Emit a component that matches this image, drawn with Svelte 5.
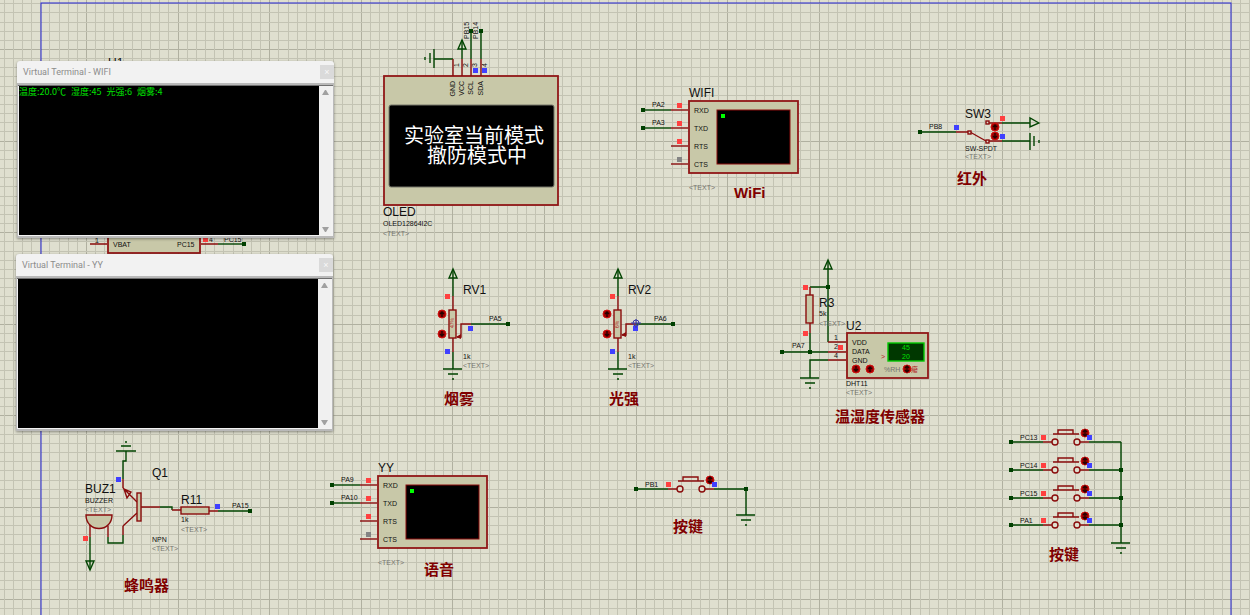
<script>
	const CELL = 9.16;
	const TILE = 458;

	const gridLines = Array.from({ length: 50 }, (_, i) => ({
		at: Math.round(i * CELL),
		major: i % 10 === 0
	}));

	const terminals = [
		{
			id: 'wifi',
			title: 'Virtual Terminal - WIFI',
			readings: ['温度:20.0℃', '湿度:45', '光强:6', '烟雾:4']
		},
		{ id: 'yy', title: 'Virtual Terminal - YY', readings: [] }
	];

	const headings = [
		[734, 198, 'WiFi'],
		[957, 184, '红外'],
		[444, 404, '烟雾'],
		[609, 404, '光强'],
		[835, 422, '温湿度传感器'],
		[124, 591, '蜂鸣器'],
		[424, 575, '语音'],
		[673, 532, '按键'],
		[1049, 560, '按键']
	];

	const oledPins = [
		{ x: 453, name: 'GND' },
		{ x: 462, name: 'VCC' },
		{ x: 471, name: 'SCL' },
		{ x: 481, name: 'SDA' }
	];

	const uartPins = [
		{ y: 110, name: 'RXD', level: 'high' },
		{ y: 128, name: 'TXD', level: 'high' },
		{ y: 146, name: 'RTS', level: 'high' },
		{ y: 164, name: 'CTS', level: 'none' }
	];

	const keys = [
		{ y: 442, net: 'PC13' },
		{ y: 470, net: 'PC14' },
		{ y: 498, net: 'PC15' },
		{ y: 525, net: 'PA1' }
	];
</script>

{#snippet dot(x, y)}
	<rect class="dot" x={x - 2} y={y - 2} width="4" height="4" />
{/snippet}

{#snippet probe(x, y, level)}
	<rect class="probe {level}" x={x - 2} y={y - 2} width="5" height="5" />
{/snippet}

{#snippet knob(x, y, glyph)}
	<g transform="translate({x} {y})">
		<circle class="knob" r="4" />
		{#if glyph === 'up'}
			<path class="knob-mark" d="M0 3V-2M-2 0L0 -2L2 0" />
		{:else if glyph === 'down'}
			<path class="knob-mark" d="M0 -3V2M-2 0L0 2L2 0" />
		{:else}
			<path class="knob-mark" d="M0 -3V3M-2 -1L0 -3L2 -1M-2 1L0 3L2 1" />
		{/if}
	</g>
{/snippet}

{#snippet ground(x, y)}
	<path class="wire" d="M{x - 10} {y}H{x + 9}M{x - 5} {y + 5}H{x + 5}M{x - 1} {y + 10}H{x + 1}" />
{/snippet}

{#snippet power(x, y)}
	<path class="arrow" d="M{x} {y}L{x - 4} {y + 9}H{x + 4}Z" />
{/snippet}

{#snippet uart(x, y, name, nets)}
	<g transform="translate({x} {y})">
		<text class="name" x="689" y="97">{name}</text>
		<rect class="chip" x="689" y="101" width="109" height="72" />
		<rect class="crt" x="717" y="110" width="73" height="54" />
		<rect class="cursor" x="721" y="114" width="4" height="4" />
		{#each uartPins as pin, i}
			<path class="pin" d="M671 {pin.y}H688" />
			<text class="small" x="694" y={pin.y + 3}>{pin.name}</text>
			{@render probe(679, pin.y - 5, pin.level)}
			{#if nets[i]}
				<path class="wire" d="M643 {pin.y}H671" />
				{@render dot(643, pin.y)}
				<text class="small" x="652" y={pin.y - 3}>{nets[i]}</text>
			{/if}
		{/each}
		<text class="small note" x="689" y="190">&lt;TEXT&gt;</text>
	</g>
{/snippet}

{#snippet pot(x, name, net, value, tap)}
	<g transform="translate({x} 0)">
		<path class="wire" d="M453 270V296M453 352V369M471 324H508" />
		<path class="pin" d="M453 296V310M453 338V352M471 324H461V{tap}H457" />
		<path class="tip" d="M456 {tap}L461 {tap - 3}V{tap + 2}Z" />
		<rect class="body" x="449" y="310" width="7" height="28" />
		<text class="micro red" transform="translate(454 328) rotate(-90)">{value}</text>
		{@render power(453, 269)}
		{@render ground(453, 369)}
		{@render dot(508, 324)}
		{@render probe(447, 296, 'high')}
		{@render probe(447, 351, 'low')}
		{@render probe(470, 328, 'low')}
		{@render knob(442, 314, 'up')}
		{@render knob(442, 334, 'down')}
		<text class="name" x="463" y="294">{name}</text>
		<text class="small" x="489" y="321">{net}</text>
		<text class="small" x="463" y="359">1k</text>
		<text class="small note" x="463" y="368">&lt;TEXT&gt;</text>
	</g>
{/snippet}

{#snippet key(x, y, net)}
	<g transform="translate({x} {y})">
		<path class="wire" d="M0 0H32M78 0H110" />
		<path class="pin" d="M32 0H41M69 0H78M42 -8H68M47 -8V-12H62V-8" />
		<circle class="contact" cx="44" cy="0" r="3" />
		<circle class="contact" cx="66" cy="0" r="3" />
		{@render dot(0, 0)}
		{@render probe(32, -5, 'high')}
		{@render knob(74, -9, 'both')}
		{@render probe(78, -5, 'low')}
		<text class="small" x="9" y="-2">{net}</text>
	</g>
{/snippet}

<main>
	<svg class="sheet" role="img" aria-label="Schematic">
		<defs>
			<pattern id="grid" x="86" y="49" width={TILE} height={TILE} patternUnits="userSpaceOnUse">
				{#each gridLines as line}
					<rect class:major={line.major} class="grid-line" x={line.at} y="0" width="1" height={TILE} />
					<rect class:major={line.major} class="grid-line" x="0" y={line.at} width={TILE} height="1" />
				{/each}
			</pattern>
		</defs>
		<rect width="100%" height="100%" fill="url(#grid)" />
		<rect class="frame" x="41" y="3" width="1190" height="842" />

		<!-- U1, mostly behind the terminals -->
		<text class="name" x="108" y="67">U1</text>
		<rect class="chip" x="108" y="72" width="92" height="181" />
		<path class="pin" d="M90 244H107M201 244H218" />
		<path class="wire" d="M218 244H244" />
		{@render dot(244, 244)}
		{@render probe(205, 239, 'high')}
		<text class="small" x="113" y="247">VBAT</text>
		<text class="small" x="177" y="247">PC15</text>
		<text class="small" x="95" y="243">1</text>
		<text class="small" x="209" y="242">4</text>
		<text class="small" x="224" y="242">PC15</text>

		<!-- OLED -->
		<path class="wire" d="M453 59H434M434 49V68M430 53V63M425 57V60M462 59V40M471 59V31M481 59V31" />
		<rect class="chip" x="384" y="76" width="174" height="129" />
		<rect class="glass" x="389" y="105" width="165" height="82" rx="2" />
		{#each oledPins as pin, i}
			<path class="pin" d="M{pin.x} 59V76" />
			<text class="small" transform="translate({pin.x + 6} 67) rotate(-90)">{i + 1}</text>
			<text class="small end" transform="translate({pin.x + 2} 81) rotate(-90)">{pin.name}</text>
		{/each}
		{@render power(462, 40)}
		{@render dot(471, 31)}
		{@render dot(481, 31)}
		{@render probe(475, 70, 'low')}
		{@render probe(484, 70, 'low')}
		<text class="small" transform="translate(469 39) rotate(-90)">PB15</text>
		<text class="small" transform="translate(478 39) rotate(-90)">PB14</text>
		<text class="oled" x="404" y="143">实验室当前模式</text>
		<text class="oled" x="427" y="163">撤防模式中</text>
		<text class="name" x="383" y="216">OLED</text>
		<text class="small" x="383" y="226">OLED12864I2C</text>
		<text class="small note" x="383" y="236">&lt;TEXT&gt;</text>

		{@render uart(0, 0, 'WIFI', ['PA2', 'PA3'])}
		{@render uart(-311, 375, 'YY', ['PA9', 'PA10'])}

		<!-- SW3 -->
		<path class="wire" d="M920 132H956M1002 123H1030M1002 141H1030M1030 133V150M1034 136V146M1039 140V143" />
		<path class="pin" d="M956 132H968M989 123H1002M989 141H1002" />
		<path class="slant" d="M970 132L986 141" />
		<rect class="contact" x="968" y="131" width="3" height="3" />
		<rect class="contact" x="986" y="121" width="3" height="3" />
		<rect class="contact" x="986" y="140" width="3" height="3" />
		<path class="arrow" d="M1039 123L1030 118V127Z" />
		{@render dot(920, 132)}
		{@render probe(956, 127, 'low')}
		{@render probe(1002, 118, 'high')}
		{@render probe(1002, 136, 'low')}
		{@render knob(995, 127, 'up')}
		{@render knob(995, 136, 'down')}
		<text class="name" x="965" y="118">SW3</text>
		<text class="small" x="929" y="129">PB8</text>
		<text class="small" x="965" y="151">SW-SPDT</text>
		<text class="small note" x="965" y="159">&lt;TEXT&gt;</text>

		{@render pot(0, 'RV1', 'PA5', '47%', 337)}
		{@render pot(165, 'RV2', 'PA6', '6%', 335)}
		<path class="origin" d="M631 323H641M636 319V328M633 323A3 3 0 1 1 639 323A3 3 0 1 1 633 323" />

		<!-- DHT11 -->
		<path class="wire" d="M828 261V342M810 287H828M810 333V352M782 352H828M828 360H810V378" />
		<path class="pin" d="M810 287V295M810 323V333M828 342H846M828 352H846M828 360H846" />
		<rect class="body" x="806" y="295" width="7" height="28" />
		{@render power(828, 260)}
		{@render ground(810, 378)}
		{@render dot(828, 287)}
		{@render dot(810, 352)}
		{@render dot(782, 352)}
		<rect class="chip" x="847" y="333" width="81" height="45" />
		<rect class="lcd" x="888" y="343" width="36" height="18" />
		<text class="small digits" x="902" y="350">45</text>
		<text class="small digits" x="902" y="359">20</text>
		<text class="small red" x="881" y="359">&gt;</text>
		<text class="small note" x="884" y="372">%RH</text>
		<text class="small red" x="911" y="372">癈</text>
		{@render knob(856, 369, 'down')}
		{@render knob(870, 369, 'up')}
		{@render knob(907, 369, 'both')}
		{@render probe(805, 287, 'high')}
		{@render probe(805, 333, 'high')}
		{@render probe(840, 347, 'high')}
		<text class="name" x="819" y="307">R3</text>
		<text class="small" x="819" y="316">5k</text>
		<text class="small note" x="819" y="326">&lt;TEXT&gt;</text>
		<text class="name" x="846" y="330">U2</text>
		<text class="small" x="834" y="340">1</text>
		<text class="small" x="834" y="349">2</text>
		<text class="small" x="834" y="358">4</text>
		<text class="small" x="852" y="345">VDD</text>
		<text class="small" x="852" y="354">DATA</text>
		<text class="small" x="852" y="363">GND</text>
		<text class="small" x="792" y="348">PA7</text>
		<text class="small" x="846" y="386">DHT11</text>
		<text class="small note" x="846" y="395">&lt;TEXT&gt;</text>

		<!-- buzzer driver -->
		<path class="wire" d="M116 451H136M121 446H131M125 442H127M126 451V461H123V479M123 535V543H108V537M90 537V569M160 507H172V510M218 511H250" />
		<path class="pin" d="M123 479V488M123 526V535M108 526V537M90 525V537M141 507H160M172 510H181M209 511H218" />
		<path class="slant" d="M123 488L137 502M137 513L123 526M124 489L127 498L131 492Z" />
		<rect class="body" x="137" y="493" width="4" height="28" />
		<rect class="body" x="181" y="507" width="28" height="7" />
		<path class="bell" d="M86 515H112C112 533 86 533 86 515Z" />
		<path class="arrow" d="M90 570L86 561H94Z" />
		{@render dot(250, 511)}
		{@render probe(118, 479, 'low')}
		{@render probe(85, 538, 'high')}
		{@render probe(217, 506, 'low')}
		<text class="name" x="152" y="477">Q1</text>
		<text class="name" x="85" y="493">BUZ1</text>
		<text class="small" x="85" y="503">BUZZER</text>
		<text class="small note" x="85" y="512">&lt;TEXT&gt;</text>
		<text class="name" x="181" y="504">R11</text>
		<text class="small" x="181" y="522">1k</text>
		<text class="small note" x="181" y="532">&lt;TEXT&gt;</text>
		<text class="small" x="152" y="542">NPN</text>
		<text class="small note" x="152" y="551">&lt;TEXT&gt;</text>
		<text class="small" x="232" y="508">PA15</text>

		<!-- push buttons -->
		{@render key(636, 489, 'PB1')}
		<path class="wire" d="M746 489V515" />
		{@render dot(746, 489)}
		{@render ground(746, 515)}

		<path class="wire" d="M1121 442V543" />
		{#each keys as k, i}
			{@render key(1011, k.y, k.net)}
			{#if i > 0}
				{@render dot(1121, k.y)}
			{/if}
		{/each}
		{@render ground(1121, 543)}

		{#each headings as [x, y, label]}
			<text class="heading" {x} {y}>{label}</text>
		{/each}
	</svg>

	{#each terminals as terminal}
		<section class="terminal {terminal.id}" aria-label={terminal.title}>
			<header>
				<h2>{terminal.title}</h2>
				<button class="close" aria-label="Close">×</button>
			</header>
			<div class="screen">
				<p>
					{#each terminal.readings as reading}
						<span>{reading}</span>{' '}
					{/each}
				</p>
				<div class="scrollbar">
					<button aria-label="Scroll up">
						<svg width="7" height="5"><path d="M0 5L3 0H4L7 5Z" /></svg>
					</button>
					<button aria-label="Scroll down">
						<svg width="7" height="5"><path d="M0 0L3 5H4L7 0Z" /></svg>
					</button>
				</div>
			</div>
		</section>
	{/each}
</main>

<style>
	:global(body) {
		background: #dfdfcf;
		margin: 0;
	}

	main {
		font-family: 'Liberation Sans', 'Noto Sans CJK SC', sans-serif;
		min-height: 100vh;
		overflow: hidden;
		position: relative;
	}

	.sheet {
		display: block;
		height: 100vh;
		width: 100%;
	}

	.grid-line {
		fill: #c3c3b3;
	}

	.grid-line.major {
		fill: #b0b0a0;
	}

	.frame {
		fill: none;
		stroke: #2222d2;
	}

	.wire,
	.pin {
		fill: none;
		stroke: #004400;
		stroke-width: 1.4;
	}

	.pin {
		stroke: #8a0c0c;
	}

	.slant {
		fill: none;
		stroke: #8a0c0c;
		stroke-width: 1.4;
	}

	.arrow {
		fill: none;
		stroke: #004400;
		stroke-width: 1.4;
	}

	.tip {
		fill: #8a0c0c;
	}

	.dot {
		fill: #004000;
	}

	.chip {
		fill: #c8c8a8;
		stroke: #911717;
		stroke-width: 1.8;
	}

	.body,
	.bell,
	.contact {
		fill: #c8c8a8;
		stroke: #8a0c0c;
		stroke-width: 1.4;
	}

	.contact {
		fill: #dfdfcf;
	}

	.crt {
		fill: #000;
		stroke: #8a0c0c;
	}

	.cursor {
		fill: #00ff00;
	}

	.glass {
		fill: #000;
		stroke: #77776a;
	}

	.lcd {
		fill: #003800;
		stroke: #00c800;
		stroke-width: 1.4;
	}

	.probe.high {
		fill: #ff4040;
	}

	.probe.low {
		fill: #4040ff;
	}

	.probe.none {
		fill: #848484;
	}

	.knob {
		fill: #a00000;
		stroke: #d01010;
	}

	.knob-mark {
		fill: none;
		stroke: #280000;
		stroke-width: 1.4;
	}

	.origin {
		fill: none;
		stroke: #3838a8;
	}

	text {
		fill: #101010;
		white-space: pre;
	}

	.name {
		font-size: 12px;
	}

	.small {
		font-size: 7px;
	}

	.micro {
		font-size: 5px;
	}

	.end {
		text-anchor: end;
	}

	.note {
		fill: #74746e;
	}

	.red {
		fill: #b02020;
	}

	.digits {
		fill: #00e000;
	}

	.oled {
		fill: #fff;
		font-family: 'Noto Sans CJK SC', sans-serif;
		font-size: 20px;
	}

	.heading {
		fill: #800000;
		font-size: 15px;
		font-weight: bold;
	}

	.terminal {
		background: #f2f2f2;
		border-radius: 3px 3px 0 0;
		box-shadow: 0 1px 3px rgb(0, 0, 0, 0.4);
		display: flex;
		flex-direction: column;
		height: 177px;
		position: absolute;
		width: 317px;
	}

	.terminal.wifi {
		left: 17px;
		top: 61px;
	}

	.terminal.yy {
		left: 16px;
		top: 254px;
	}

	header {
		align-items: center;
		display: flex;
		height: 22px;
		justify-content: space-between;
		padding-left: 6px;
	}

	h2 {
		color: #8c8c8c;
		font: 9px/12px Roboto, sans-serif;
		margin: 0;
	}

	button {
		align-items: center;
		background: none;
		border: none;
		display: flex;
		justify-content: center;
		padding: 0;
	}

	.close {
		background: #dadada;
		color: #f8f8f8;
		font: 9px 'Liberation Sans', sans-serif;
		height: 14px;
		width: 14px;
	}

	.screen {
		border: 2px solid #b9b9b9;
		border-width: 2px 1px;
		box-shadow: inset 0 1px #707070;
		display: flex;
		flex: 1;
		padding: 1px 2px 1px 1px;
	}

	p {
		background: #000;
		color: #00e000;
		flex: 1;
		font: 9px/12px 'Noto Sans CJK SC', sans-serif;
		margin: 0;
	}

	p span {
		margin-right: 3px;
	}

	.scrollbar {
		background: #f0f0f0;
		display: flex;
		flex-direction: column;
		justify-content: space-between;
		width: 12px;
	}

	.scrollbar button {
		height: 12px;
		width: 12px;
	}

	.scrollbar path {
		fill: #a0a0a0;
	}
</style>
